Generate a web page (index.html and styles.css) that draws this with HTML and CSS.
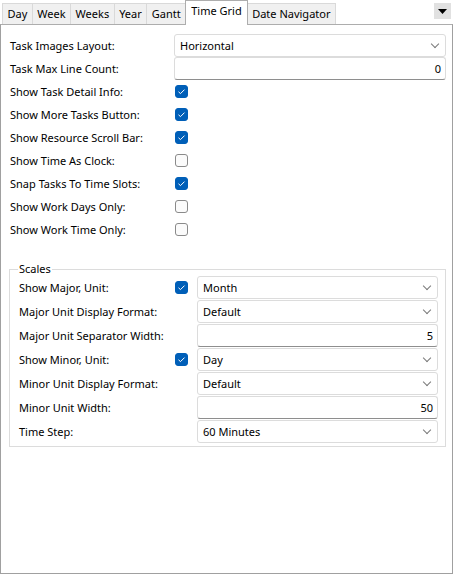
FILE: index.html
```html
<!DOCTYPE html>
<html>
<head>
<meta charset="utf-8">
<link rel="stylesheet" href="styles.css">
</head>
<body>
<div class="window">
  <div class="tabbar">
    <div class="tabs">
      <div class="tab">Day</div>
      <div class="tab">Week</div>
      <div class="tab">Weeks</div>
      <div class="tab">Year</div>
      <div class="tab">Gantt</div>
      <div class="tab active">Time Grid</div>
      <div class="tab">Date Navigator</div>
    </div>
    <div class="menu-btn"><svg width="9" height="5" viewBox="0 0 9 5"><path d="M0 0H9L4.5 5Z" fill="#000"/></svg></div>
  </div>
  <div class="panel">
    <div class="grid">
      <div class="row"><span class="label">Task Images Layout:</span><div class="select wide">Horizontal<i class="chev"></i></div></div>
      <div class="row"><span class="label">Task Max Line Count:</span><div class="input wide">0</div></div>
      <div class="row"><span class="label">Show Task Detail Info:</span><span class="cb on"></span></div>
      <div class="row"><span class="label">Show More Tasks Button:</span><span class="cb on"></span></div>
      <div class="row"><span class="label">Show Resource Scroll Bar:</span><span class="cb on"></span></div>
      <div class="row"><span class="label">Show Time As Clock:</span><span class="cb"></span></div>
      <div class="row"><span class="label">Snap Tasks To Time Slots:</span><span class="cb on"></span></div>
      <div class="row"><span class="label">Show Work Days Only:</span><span class="cb"></span></div>
      <div class="row"><span class="label">Show Work Time Only:</span><span class="cb"></span></div>
    </div>
    <fieldset class="group">
      <legend>Scales</legend>
      <div class="grow"><span class="glabel">Show Major, Unit:</span><span class="cb on"></span><div class="select narrow">Month<i class="chev"></i></div></div>
      <div class="grow"><span class="glabel">Major Unit Display Format:</span><span class="cb-space"></span><div class="select narrow">Default<i class="chev"></i></div></div>
      <div class="grow"><span class="glabel">Major Unit Separator Width:</span><span class="cb-space"></span><div class="input narrow">5</div></div>
      <div class="grow"><span class="glabel">Show Minor, Unit:</span><span class="cb on"></span><div class="select narrow">Day<i class="chev"></i></div></div>
      <div class="grow"><span class="glabel">Minor Unit Display Format:</span><span class="cb-space"></span><div class="select narrow">Default<i class="chev"></i></div></div>
      <div class="grow"><span class="glabel">Minor Unit Width:</span><span class="cb-space"></span><div class="input narrow">50</div></div>
      <div class="grow"><span class="glabel">Time Step:</span><span class="cb-space"></span><div class="select narrow">60 Minutes<i class="chev"></i></div></div>
    </fieldset>
  </div>
</div>
</body>
</html>
```

FILE: styles.css
```css
* { box-sizing: border-box; }
html, body { margin: 0; padding: 0; background: #fff; }
body {
  font-family: "Noto Sans", "DejaVu Sans", sans-serif;
  font-size: 11px;
  color: #000;
  width: 453px;
  height: 574px;
  overflow: hidden;
}
.window { width: 453px; height: 574px; display: flex; flex-direction: column; }
.tabbar { height: 24px; display: flex; align-items: flex-end; justify-content: space-between; position: relative; z-index: 1; }
.tabs { display: flex; align-items: flex-end; padding-left: 2px; }
.tab {
  height: 21px;
  padding: 0 4.5px;
  line-height: 20px;
  background: #f0f0f0;
  border: 1px solid #d9d9d9;
  border-bottom: none;
  margin-right: -1px;
  color: #000;
  white-space: nowrap;
}
.tab.active {
  background: #fff;
  border-color: #adadad;
  line-height: 20px;
  margin-bottom: -1px;
  height: 25px;
  padding: 0 5px;
  position: relative;
  z-index: 2;
}
.menu-btn {
  width: 17px; height: 16px;
  background: #e1e1e1;
  margin: 0 2px 5px 0;
  display: flex; align-items: center; justify-content: center;
}
.panel {
  flex: 1;
  border: 1px solid #a0a0a0;
  border-top-color: #adadad;
  padding: 8px 6px 0 9px;
}
.grid { display: flex; flex-direction: column; margin-top: 1px; }
.row { height: 23px; display: flex; align-items: center; white-space: nowrap; }
.label { width: 164px; flex-shrink: 0; }
.select, .input {
  height: 23px;
  background: #fff;
  border: 1px solid #dcdcdc;
  border-radius: 3px;
  display: flex; align-items: center;
  padding: 0 5px;
  position: relative;
}
.input { justify-content: flex-end; border-bottom-color: #8e8e8e; padding-right: 4px; }
.wide { width: 272px; }
.narrow { width: 242px; }
.chev {
  position: absolute; right: 7px; top: 6px;
  width: 6px; height: 6px;
  border-right: 1px solid #7a7a7a; border-bottom: 1px solid #7a7a7a;
  transform: rotate(45deg);
}
.cb {
  width: 13px; height: 13px;
  border: 1px solid #8a8a8a;
  border-radius: 3px;
  background: #fbfbfb;
  flex-shrink: 0;
  margin-left: 1px;
}
.cb.on {
  background: #005fb8 url("data:image/svg+xml,%3Csvg xmlns='http://www.w3.org/2000/svg' width='13' height='13'%3E%3Cpath d='M3.5 6.8L5.5 8.6L9.5 4.6' fill='none' stroke='%23fff' stroke-width='1'/%3E%3C/svg%3E") no-repeat center;
  border-color: #005fb8;
}
.cb-space { width: 13px; margin-left: 1px; flex-shrink: 0; }
.group {
  margin: 22px 0 0 -1px;
  width: 437px;
  border: 1px solid #dcdcdc;
  padding: 0 7px 3px 9px;
  min-width: 0;
}
.group legend { padding: 0 1px; margin-left: -1px; line-height: 12px; }
.grow { height: 24px; display: flex; align-items: center; white-space: nowrap; }
.glabel { width: 155px; flex-shrink: 0; }
.grow .cb, .grow .cb-space { margin-right: 9px; }
```
